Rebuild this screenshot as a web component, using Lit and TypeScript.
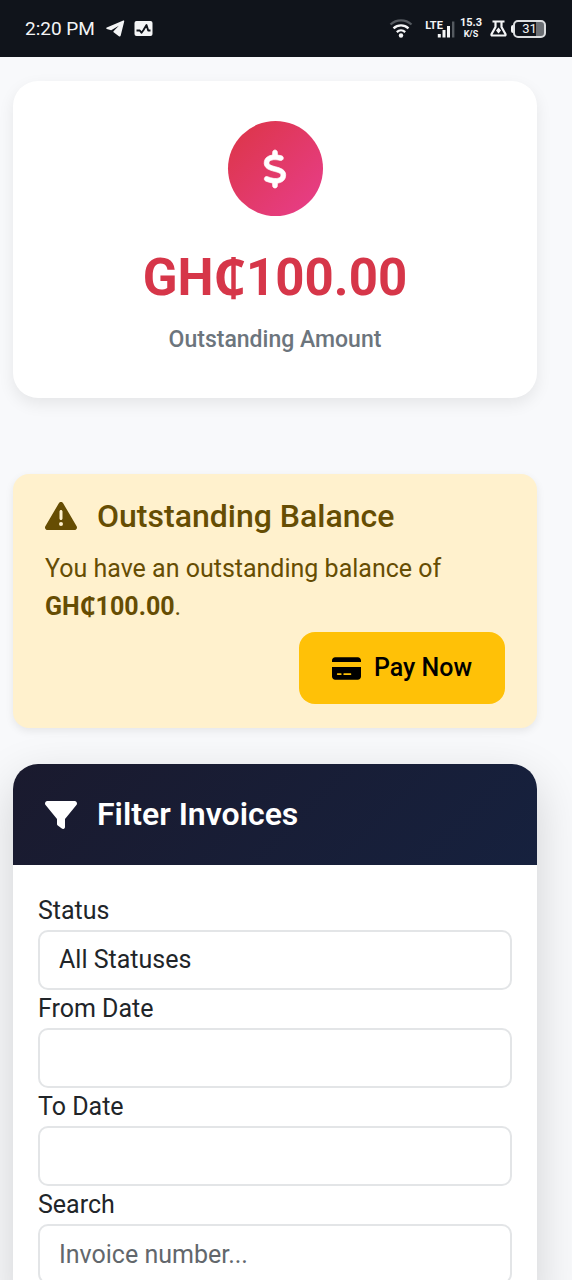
import { LitElement, html, css, svg } from "lit";
import { customElement, property, state } from "lit/decorators.js";

const ICONS = {
  dollar: {
    box: "0 0 320 512",
    body: svg`<path fill="currentColor" stroke="currentColor" stroke-width="10" d="M160 0c17.700 0 32 14.300 32 32v35.700c1.600 .2 3.100 .4 4.700 .7c.4 .1 .7 .1 1.100 .2l48 8.800c17.400 3.200 28.900 19.900 25.700 37.200s-19.900 28.900-37.200 25.700l-47.500-8.700c-31.300-4.600-58.900-1.500-78.300 6.200s-27.200 18.300-29 28.100c-2 10.700-.5 16.700 1.200 20.400c1.800 3.900 5.500 8.300 12.800 13.200c16.300 10.700 41.300 17.700 73.700 26.300l2.900 .8c28.600 7.600 63.600 16.800 89.600 33.800c14.200 9.300 27.600 21.900 35.900 39.500c8.500 17.900 10.300 37.900 6.400 59.200c-6.900 38-33.100 63.400-65.600 76.700c-13.700 5.600-28.600 9.200-44.400 11V480c0 17.700-14.300 32-32 32s-32-14.300-32-32v-34.900c-.4-.1-.9-.1-1.300-.2h-.2c-24.400-3.800-64.500-14.300-91.500-26.300c-16.100-7.200-23.400-26.100-16.200-42.200s26.100-23.400 42.200-16.200c20.900 9.300 55.300 18.500 75.200 21.600c31.900 4.700 58.200 2 76-5.300c16.900-6.900 24.600-16.900 26.800-28.900c1.900-10.600 .4-16.700-1.300-20.400c-1.900-4-5.600-8.400-13-13.300c-16.400-10.700-41.500-17.700-74-26.300l-2.800-.7c-28.500-7.600-63.500-16.900-89.400-33.900c-14.200-9.300-27.500-22-35.800-39.600c-8.400-17.900-10.100-37.900-6.100-59.200C23.700 116 52.300 91.200 84.800 78.300c13.300-5.300 27.900-8.900 43.200-11V32c0-17.700 14.300-32 32-32z"/>`,
  },
  warning: {
    box: "0 0 512 448",
    body: svg`<path fill="currentColor" d="M256 0c14 0 27 7.400 34 19.500l216 368c7.300 12.400 7.300 27.700 .2 40.100S486.300 448 472 448H40c-14.300 0-27.600-7.700-34.700-20.100s-7-27.800 .2-40.100l216-368C228.700 7.400 242 0 256 0zm0 128c-13.300 0-24 10.700-24 24v112c0 13.300 10.700 24 24 24s24-10.700 24-24V152c0-13.300-10.700-24-24-24zm32 224a32 32 0 1 0-64 0 32 32 0 1 0 64 0z"/>`,
  },
  card: {
    box: "0 0 576 448",
    body: svg`<path fill="currentColor" d="M64 0C28.700 0 0 28.700 0 64v32h576V64c0-35.300-28.700-64-64-64H64zM576 192H0v192c0 35.300 28.700 64 64 64h448c35.300 0 64-28.700 64-64V192zM112 320h64c8.800 0 16 7.200 16 16s-7.200 16-16 16h-64c-8.800 0-16-7.200-16-16s7.200-16 16-16zm112 16c0-8.800 7.200-16 16-16h128c8.800 0 16 7.200 16 16s-7.200 16-16 16H240c-8.800 0-16-7.200-16-16z"/>`,
  },
  filter: {
    box: "0 0 512 448",
    body: svg`<path fill="currentColor" d="M3.900 22.900C10.500 8.900 24.500 0 40 0h432c15.500 0 29.500 8.900 36.100 22.900s4.600 30.500-5.200 42.500L320 288.900V416c0 12.100-6.800 23.200-17.700 28.600s-23.800 4.300-33.500-3l-64-48c-8.100-6-12.800-15.500-12.800-25.600v-79.100L9 65.300C-.7 53.400-2.800 36.800 3.900 22.900z"/>`,
  },
  telegram: {
    box: "0 0 19 17",
    body: svg`<path fill="currentColor" d="M17.300 .6 .8 7.600c-.8 .4-.8 1 0 1.300l4.400 1.400 7.600-4.500-5.300 5.400-.2 .9 5.600 4.100c.8 .5 1.600 .3 1.800-.8L18.200 1.600c.2-.9-.3-1.300-.9-1z"/>`,
  },
  pulse: {
    box: "0 0 19 17",
    body: svg`<rect x=".5" y="1" width="18" height="15" rx="2" fill="currentColor"/><path d="M2.500 10.500h3.300l1.700 2.300 2-2.800L12.500 5l1.700 5.500h2.300" fill="none" stroke="#10141b" stroke-width="1.900" stroke-linejoin="round"/>`,
  },
  wifi: {
    box: "0 0 24 19",
    body: svg`<g fill="none" stroke="currentColor" stroke-width="2.300"><path d="M1.500 5.500a15.500 15.500 0 0 1 21 0" stroke="#555a60"/><path d="M4.500 9.300a11 11 0 0 1 15 0"/><path d="M7.800 13.100a6.200 6.200 0 0 1 8.400 0"/></g><circle cx="12" cy="16.500" r="2.200" fill="currentColor"/>`,
  },
  signal: {
    box: "0 0 18 18",
    body: svg`<path fill="currentColor" d="M.8 14h3v3.500h-3zM5.500 10h3v7.500h-3zM10 6h3v11.500h-3z"/><path fill="#555a60" d="M15 1.500h2.400v16H15z"/>`,
  },
  flask: {
    box: "0 0 17 17",
    body: svg`<path d="M2.500 1.500h12M5.500 2v5L1.600 14q-.6 1.500 .8 1.500h12.200q1.400 0 .8-1.500L11.500 7V2" fill="none" stroke="currentColor" stroke-width="2.200"/><path d="M8.500 7.500l2.500 3-2.500 3-2.500-3z" fill="currentColor"/>`,
  },
};

type IconName = keyof typeof ICONS;

@customElement("app-icon")
export class AppIcon extends LitElement {
  @property() name: IconName = "dollar";

  static styles = css`
    :host { display: inline-block; flex: none; }
    .glyph { display: block; width: 100%; height: 100%; overflow: visible; }
  `;

  render() {
    const icon = ICONS[this.name];
    return html`<svg class="glyph" viewBox=${icon.box} aria-hidden="true">${icon.body}</svg>`;
  }
}

@customElement("status-bar")
export class StatusBar extends LitElement {
  @property({ type: Number }) battery = 31;

  static styles = css`
    :host {
      display: flex;
      align-items: center;
      justify-content: space-between;
      box-sizing: border-box;
      height: 57px;
      padding: 0 26px 0 25px;
      background: #10141b;
      color: #f4f5f6;
    }
    .side { display: flex; align-items: center; }
    .time { font-size: 19px; line-height: 24px; margin-right: 11px; }
    .telegram { width: 19px; height: 17px; margin-right: 9px; }
    .pulse { width: 19px; height: 17px; }
    .wifi { width: 24px; height: 19px; margin-right: 12px; }
    .network { display: flex; align-items: flex-start; height: 20px; margin-right: 5px; }
    .lte { font-size: 11px; line-height: 13px; font-weight: 700; }
    .signal { width: 18px; height: 18px; margin: 1px 0 0 -6px; }
    .speed {
      display: grid;
      justify-items: center;
      font-size: 11px;
      line-height: 12px;
      font-weight: 700;
      margin-right: 8px;
    }
    .unit { font-size: 9px; line-height: 11px; }
    .flask { width: 17px; height: 17px; margin-right: 4px; }
    .nub { width: 2px; height: 8px; border-radius: 2px 0 0 2px; background: currentColor; }
    .battery {
      box-sizing: border-box;
      width: 33px;
      height: 18px;
      border: 2px solid #dcdee0;
      border-radius: 5px;
      font-size: 13px;
      line-height: 14px;
      text-align: center;
      background: linear-gradient(to left, #6b6f74 8px, transparent 8px);
    }
  `;

  render() {
    return html`
      <div class="side">
        <span class="time">2:20 PM</span>
        <app-icon class="telegram" name="telegram"></app-icon>
        <app-icon class="pulse" name="pulse"></app-icon>
      </div>
      <div class="side">
        <app-icon class="wifi" name="wifi"></app-icon>
        <div class="network">
          <span class="lte">LTE</span>
          <app-icon class="signal" name="signal"></app-icon>
        </div>
        <div class="speed"><span>15.3</span><span class="unit">K/S</span></div>
        <app-icon class="flask" name="flask"></app-icon>
        <span class="nub"></span>
        <div class="battery">${this.battery}</div>
      </div>
    `;
  }
}

@customElement("app-root")
export class AppRoot extends LitElement {
  @state() private amount = "GH₵100.00";

  static styles = css`
    :host {
      display: flex;
      flex-direction: column;
      height: 100vh;
      background: #f8f9fb;
      color: #212529;
      font-family: Roboto, "Noto Sans", sans-serif;
      font-size: 25px;
      line-height: 38px;
    }
    .page {
      flex: 1;
      min-height: 0;
      overflow-y: auto;
      scrollbar-width: none;
      padding: 24px 35px 0 13px;
    }
    .stat {
      display: flex;
      flex-direction: column;
      align-items: center;
      padding: 40px 24px;
      margin-bottom: 76px;
      border-radius: 25px;
      background: #fff;
      box-shadow: 0 6px 16px rgba(0, 0, 0, 0.08);
    }
    .badge {
      display: grid;
      place-items: center;
      width: 95px;
      height: 95px;
      margin-bottom: 26px;
      border-radius: 50%;
      color: #fff;
      background: linear-gradient(135deg, #dc3545, #e83e8c);
    }
    .dollar { width: 24px; height: 38px; }
    .value { font-size: 51px; line-height: 72px; font-weight: 700; color: #d63649; }
    .caption { margin-top: 8px; font-size: 23px; line-height: 36px; font-weight: 500; color: #6c757d; }
    .alert {
      padding: 24px 32px;
      margin-bottom: 36px;
      border-radius: 16px;
      background: #fff1cd;
      color: #664d03;
      box-shadow: 0 3px 8px rgba(0, 0, 0, 0.08);
    }
    .heading {
      display: flex;
      align-items: center;
      gap: 20px;
      margin: 0;
      font-size: 32px;
      line-height: 36px;
      font-weight: 500;
    }
    .mark { width: 32px; height: 28px; }
    .message { margin: 16px 0 6px; }
    .actions { display: flex; justify-content: flex-end; }
    .pay {
      display: flex;
      align-items: center;
      gap: 13px;
      height: 72px;
      padding: 0 33px;
      border: 0;
      border-radius: 16px;
      background: #ffc107;
      color: #000;
      font: 500 25px/38px Roboto, "Noto Sans", sans-serif;
    }
    .card-icon { width: 29px; height: 23px; }
    .panel {
      border-radius: 25px;
      background: #fff;
      box-shadow: 0 16px 48px rgba(0, 0, 0, 0.16);
    }
    .panel-head {
      padding: 32px;
      border-radius: 25px 25px 0 0;
      color: #fff;
      background: linear-gradient(135deg, #1a1a2e, #16213e);
    }
    .panel-head .heading { line-height: 37px; font-weight: 600; }
    .form { padding: 27px 25px; }
    .label { display: block; }
    .field {
      display: block;
      box-sizing: border-box;
      width: 100%;
      height: 60px;
      padding: 0 19px;
      margin: 0;
      border: 2px solid #e3e5e7;
      border-radius: 10px;
      appearance: none;
      background: #fff;
      color: #212529;
      font: inherit;
    }
    .field::placeholder { color: #62676c; opacity: 1; }
    .date::-webkit-datetime-edit,
    .date::-webkit-calendar-picker-indicator { opacity: 0; }
  `;

  render() {
    return html`
      <status-bar></status-bar>
      <main class="page">
        <section class="stat">
          <div class="badge"><app-icon class="dollar" name="dollar"></app-icon></div>
          <div class="value">${this.amount}</div>
          <div class="caption">Outstanding Amount</div>
        </section>

        <section class="alert">
          <h2 class="heading"><app-icon class="mark" name="warning"></app-icon>Outstanding Balance</h2>
          <p class="message">You have an outstanding balance of <strong>${this.amount}</strong>.</p>
          <div class="actions">
            <button class="pay" type="button"><app-icon class="card-icon" name="card"></app-icon>Pay Now</button>
          </div>
        </section>

        <section class="panel">
          <header class="panel-head">
            <h2 class="heading"><app-icon class="mark" name="filter"></app-icon>Filter Invoices</h2>
          </header>
          <form class="form">
            <label class="label" for="status">Status</label>
            <select class="field" id="status"><option>All Statuses</option></select>
            <label class="label" for="from">From Date</label>
            <input class="field date" id="from" type="date" />
            <label class="label" for="to">To Date</label>
            <input class="field date" id="to" type="date" />
            <label class="label" for="search">Search</label>
            <input class="field" id="search" type="text" placeholder="Invoice number..." />
          </form>
        </section>
      </main>
    `;
  }
}
